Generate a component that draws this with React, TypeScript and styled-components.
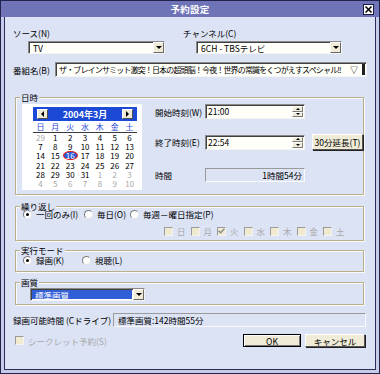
import React from 'react'
import styled, { createGlobalStyle } from 'styled-components'

const GlobalStyle = createGlobalStyle`
  html, body {
    margin: 0;
    padding: 0;
    background: #ffffff;
  }
  body {
    font-family: "Noto Sans CJK JP", "Noto Sans", sans-serif;
    font-size: 8.5px;
    color: #000;
  }
  * {
    box-sizing: border-box;
  }
`

const CLIENT = '#dce3f5'
const FIELD = '#fffffa'
const FACE = '#efebd6'

const sunken = `
  border: 1px solid;
  border-color: #8a8a8a #f4f4f4 #f4f4f4 #8a8a8a;
  box-shadow: inset 1px 1px 0 #404040;
`

const Window = styled.div`
  width: 380px;
  height: 374px;
  border: 1px solid #22224e;
  background: #c6cbe7;
  display: flex;
  flex-direction: column;
`

const TitleBar = styled.div`
  height: 16px;
  flex: none;
  background: #6f74b8;
  display: grid;
  grid-template-columns: 1fr auto 1fr;
  align-items: center;
  padding: 0 5px;
  color: #fff;
  font-weight: 700;
  font-size: 9.5px;
`

const Title = styled.span`
  grid-column: 2;
  letter-spacing: 0.3px;
`

const CloseBox = styled.span`
  grid-column: 3;
  justify-self: end;
  width: 11px;
  height: 11px;
  background: #fff;
  border: 1px solid #1a1a40;
  display: grid;
  place-items: center;
`

const Frame = styled.div`
  flex: 1;
  display: flex;
  padding: 0 3px 3px;
`

const Client = styled.div`
  flex: 1;
  background: ${CLIENT};
  border: 1px solid #2c2c5c;
  border-top: 0;
  padding: 10px 0 0 8px;
`

const Label = styled.span<{ $w?: number; $muted?: boolean }>`
  display: inline-block;
  line-height: 12px;
  white-space: nowrap;
  width: ${(p) => (p.$w ? `${p.$w}px` : 'auto')};
  flex: none;
  color: ${(p) => (p.$muted ? '#a4a4a4' : '#000')};
`

const TopRow = styled.div`
  display: grid;
  grid-template-columns: 170px 1fr;
`

const Field = styled.div`
  display: flex;
  flex-direction: column;
`

const SelectBox = styled.div<{ $w: number; $indent: number }>`
  ${sunken}
  margin: 2px 0 0 ${(p) => p.$indent}px;
  width: ${(p) => p.$w}px;
  height: 13px;
  background: ${FIELD};
  display: flex;
`

const SelectText = styled.span<{ $hl?: boolean }>`
  flex: 1;
  line-height: 11px;
  padding-left: 3px;
  margin: 1px;
  white-space: nowrap;
  background: ${(p) => (p.$hl ? '#2f5ed6' : 'transparent')};
  color: ${(p) => (p.$hl ? '#fff' : '#000')};
`

const SelectArrow = styled.span`
  width: 11px;
  flex: none;
  background: ${FACE};
  border: 1px solid;
  border-color: #fff #6a6a6a #6a6a6a #fff;
  display: grid;
  place-items: center;
  &::after {
    content: '';
    border-left: 3px solid transparent;
    border-right: 3px solid transparent;
    border-top: 3px solid #000;
  }
`

const ProgramRow = styled.div`
  display: flex;
  align-items: center;
  margin-top: 8px;
`

const TextField = styled.div`
  ${sunken}
  width: 312px;
  height: 15px;
  background: ${FIELD};
  display: flex;
  align-items: center;
  padding-left: 3px;
  white-space: nowrap;
  overflow: hidden;
  font-size: 8px;
`

const FieldText = styled.span`
  flex: 1;
  overflow: hidden;
  letter-spacing: -0.85px;
`

const FieldTail = styled.span`
  flex: none;
  padding: 0 4px 0 3px;
`

const FieldBar = styled.span`
  flex: none;
  width: 3px;
  height: 11px;
  margin-right: 1px;
  background: #202020;
`

const Group = styled.div<{ $mt: number }>`
  position: relative;
  margin: ${(p) => p.$mt}px 0 0 2px;
  width: 349px;
  border: 1px solid #b9b08a;
  box-shadow: inset 1px 1px 0 #fafafa, 1px 1px 0 #fafafa;
`

const Caption = styled.span`
  position: absolute;
  top: -6px;
  left: 4px;
  padding: 0 1px;
  line-height: 10px;
  background: ${CLIENT};
`

const DateTimeBody = styled.div`
  display: flex;
  padding: 6px 0 4px 6px;
`

const Calendar = styled.div`
  width: 120px;
  background: #fff;
  padding: 3px 5px 2px 11px;
  font-size: 8px;
`

const CalHeader = styled.div`
  height: 14px;
  margin-bottom: 1px;
  background: #1c4ad6;
  display: flex;
  align-items: center;
  justify-content: space-between;
  padding: 0 4px;
`

const CalArrow = styled.span<{ $dir: 'left' | 'right' }>`
  width: 11px;
  height: 10px;
  background: ${FACE};
  border: 1px solid;
  border-color: #fff #505050 #505050 #fff;
  display: grid;
  place-items: center;
  &::after {
    content: '';
    border-top: 3px solid transparent;
    border-bottom: 3px solid transparent;
    ${(p) => (p.$dir === 'left' ? 'border-right: 3px solid #000;' : 'border-left: 3px solid #000;')}
  }
`

const CalTitle = styled.span`
  color: #fff;
  font-weight: 700;
  font-size: 9px;
`

const DayNames = styled.div`
  display: grid;
  grid-template-columns: repeat(7, 1fr);
  height: 11px;
  line-height: 10px;
  border-bottom: 1px solid #3a3a3a;
  color: #1f47d8;
  text-align: center;
`

const DateGrid = styled.div`
  display: grid;
  grid-template-columns: repeat(7, 1fr);
  grid-auto-rows: 9.2px;
  line-height: 9px;
  text-align: center;
`

const DateCell = styled.span<{ $out?: boolean }>`
  color: ${(p) => (p.$out ? '#a8a8a8' : '#000')};
  display: flex;
  justify-content: center;
  align-items: center;
`

const Selected = styled.span`
  width: 15px;
  height: 9px;
  line-height: 7px;
  border-radius: 50%;
  border: 1px solid #e3201a;
  background: #2a5ad8;
  color: #fff;
  text-align: center;
`

const TimePanel = styled.div`
  margin-left: 13px;
  display: flex;
  flex-direction: column;
`

const TimeRow = styled.div<{ $mt: number }>`
  display: flex;
  align-items: center;
  margin-top: ${(p) => p.$mt}px;
`

const SpinField = styled.div`
  ${sunken}
  width: 100px;
  height: 15px;
  background: ${FIELD};
  display: flex;
`

const SpinText = styled.span`
  flex: 1;
  line-height: 13px;
  padding-left: 2px;
`

const Spinner = styled.span`
  width: 11px;
  margin: 1px 1px 1px 0;
  display: flex;
  flex-direction: column;
`

const SpinBtn = styled.span<{ $up?: boolean }>`
  flex: 1;
  background: ${FACE};
  border: 1px solid;
  border-color: #fff #7a7a7a #7a7a7a #fff;
  display: grid;
  place-items: center;
  &::after {
    content: '';
    border-left: 2px solid transparent;
    border-right: 2px solid transparent;
    ${(p) => (p.$up ? 'border-bottom: 2px solid #000;' : 'border-top: 2px solid #000;')}
  }
`

const ReadOnly = styled.div<{ $w: number; $align?: 'left' | 'right' }>`
  border: 1px solid;
  border-color: #9a9a9a #fafafa #fafafa #9a9a9a;
  width: ${(p) => p.$w}px;
  height: 14px;
  line-height: 12px;
  text-align: ${(p) => p.$align || 'left'};
  padding: 0 2px 0 4px;
  white-space: nowrap;
`

const PushButton = styled.button<{ $w: number; $h: number; $default?: boolean }>`
  font: inherit;
  color: #000;
  width: ${(p) => p.$w}px;
  height: ${(p) => p.$h}px;
  padding: 0;
  flex: none;
  background: ${FACE};
  border: 1px solid;
  border-color: ${(p) => (p.$default ? '#000' : '#fff #555 #555 #fff')};
  box-shadow: ${(p) =>
    p.$default ? 'inset 1px 1px 0 #fff, inset -1px -1px 0 #777' : '1px 1px 0 #202020'};
  line-height: 10px;
  white-space: nowrap;
`

const GroupBody = styled.div<{ $pt: number; $pb: number; $pl: number }>`
  padding: ${(p) => p.$pt}px 0 ${(p) => p.$pb}px ${(p) => p.$pl}px;
`

const OptionRow = styled.div<{ $mt?: number; $ml?: number }>`
  display: flex;
  align-items: center;
  height: 10px;
  margin-top: ${(p) => p.$mt || 0}px;
  margin-left: ${(p) => p.$ml || 0}px;
`

const Option = styled.span<{ $w?: number; $muted?: boolean }>`
  display: flex;
  align-items: center;
  width: ${(p) => (p.$w ? `${p.$w}px` : 'auto')};
  flex: none;
  white-space: nowrap;
  line-height: 10px;
  color: ${(p) => (p.$muted ? '#a8a8a8' : '#000')};
`

const RadioDot = styled.span<{ $on?: boolean }>`
  width: 9px;
  height: 9px;
  flex: none;
  margin-right: 4px;
  border-radius: 50%;
  border: 1px solid;
  border-color: #7a7a7a #e4e4e4 #e4e4e4 #7a7a7a;
  background: #fff;
  display: grid;
  place-items: center;
  &::after {
    content: '';
    width: 3px;
    height: 3px;
    border-radius: 50%;
    background: ${(p) => (p.$on ? '#000' : 'transparent')};
  }
`

const CheckBox = styled.span`
  width: 9px;
  height: 9px;
  flex: none;
  margin-right: 4px;
  border: 1px solid;
  border-color: #9a9a9a #f4f4f4 #f4f4f4 #9a9a9a;
  background: #f0ead0;
  display: grid;
  place-items: center;
`

const InfoRow = styled.div`
  display: flex;
  align-items: center;
  margin-top: 8px;
`

const BottomRow = styled.div`
  display: flex;
  align-items: center;
  width: 352px;
  margin-top: 7px;
  gap: 4px;
`

const Secret = styled.span`
  display: flex;
  align-items: center;
  margin-left: 2px;
  margin-right: auto;
  color: #a8a8a8;
`

const Check = () => (
  <svg width="7" height="6" viewBox="0 0 7 6">
    <path d="M0.5 2.8 L2.6 4.8 L6.5 0.8" fill="none" stroke="#8c8c8c" strokeWidth="1.4" />
  </svg>
)

const CloseIcon = () => (
  <svg width="7" height="7" viewBox="0 0 7 7">
    <path d="M0.5 0.5 L6.5 6.5 M6.5 0.5 L0.5 6.5" stroke="#000" strokeWidth="1.5" />
  </svg>
)

const dayNames = ['日', '月', '火', '水', '木', '金', '土']

const buildDates = () => {
  const cells: { d: number; out: boolean }[] = [{ d: 29, out: true }]
  for (let i = 1; i <= 31; i++) cells.push({ d: i, out: false })
  for (let i = 1; i <= 10; i++) cells.push({ d: i, out: true })
  return cells
}

const weekdays = [
  { name: '日', on: false },
  { name: '月', on: false },
  { name: '火', on: true },
  { name: '水', on: false },
  { name: '木', on: false },
  { name: '金', on: false },
  { name: '土', on: false },
]

const App: React.FC = () => {
  const dates = buildDates()

  return (
    <>
      <GlobalStyle />
      <Window>
        <TitleBar>
          <Title>予約設定</Title>
          <CloseBox>
            <CloseIcon />
          </CloseBox>
        </TitleBar>
        <Frame>
          <Client>
            <TopRow>
              <Field>
                <Label>ソース(N)</Label>
                <SelectBox $w={137} $indent={15}>
                  <SelectText>TV</SelectText>
                  <SelectArrow />
                </SelectBox>
              </Field>
              <Field>
                <Label>チャンネル(C)</Label>
                <SelectBox $w={146} $indent={13}>
                  <SelectText>6CH - TBSテレビ</SelectText>
                  <SelectArrow />
                </SelectBox>
              </Field>
            </TopRow>

            <ProgramRow>
              <Label $w={42}>番組名(B)</Label>
              <TextField>
                <FieldText>ザ・ブレインサミット激突！日本の超頭脳！今夜！世界の常識をくつがえすスペシャル!!</FieldText>
                <FieldTail>▽</FieldTail>
                <FieldBar />
              </TextField>
            </ProgramRow>

            <Group $mt={20}>
              <Caption>日時</Caption>
              <DateTimeBody>
                <Calendar>
                  <CalHeader>
                    <CalArrow $dir="left" />
                    <CalTitle>2004年3月</CalTitle>
                    <CalArrow $dir="right" />
                  </CalHeader>
                  <DayNames>
                    {dayNames.map((d) => (
                      <span key={d}>{d}</span>
                    ))}
                  </DayNames>
                  <DateGrid>
                    {dates.map((c, i) => (
                      <DateCell key={i} $out={c.out}>
                        {!c.out && c.d === 16 ? <Selected>{c.d}</Selected> : c.d}
                      </DateCell>
                    ))}
                  </DateGrid>
                </Calendar>

                <TimePanel>
                  <TimeRow $mt={0}>
                    <Label $w={50}>開始時刻(W)</Label>
                    <SpinField>
                      <SpinText>21:00</SpinText>
                      <Spinner>
                        <SpinBtn $up />
                        <SpinBtn />
                      </Spinner>
                    </SpinField>
                  </TimeRow>
                  <TimeRow $mt={15}>
                    <Label $w={50}>終了時刻(E)</Label>
                    <SpinField>
                      <SpinText>22:54</SpinText>
                      <Spinner>
                        <SpinBtn $up />
                        <SpinBtn />
                      </Spinner>
                    </SpinField>
                    <PushButton $w={51} $h={16} style={{ marginLeft: 7 }}>
                      30分延長(T)
                    </PushButton>
                  </TimeRow>
                  <TimeRow $mt={18}>
                    <Label $w={50}>時間</Label>
                    <ReadOnly $w={100} $align="right">
                      1時間54分
                    </ReadOnly>
                  </TimeRow>
                </TimePanel>
              </DateTimeBody>
            </Group>

            <Group $mt={11}>
              <Caption>繰り返し</Caption>
              <GroupBody $pt={2} $pb={4} $pl={7}>
                <OptionRow>
                  <Option $w={61}>
                    <RadioDot $on />
                    一回のみ(I)
                  </Option>
                  <Option $w={46}>
                    <RadioDot />
                    毎日(O)
                  </Option>
                  <Option>
                    <RadioDot />
                    毎週－曜日指定(P)
                  </Option>
                </OptionRow>
                <OptionRow $mt={7} $ml={141}>
                  {weekdays.map((w) => (
                    <Option key={w.name} $w={26.5} $muted>
                      <CheckBox>{w.on && <Check />}</CheckBox>
                      {w.name}
                    </Option>
                  ))}
                </OptionRow>
              </GroupBody>
            </Group>

            <Group $mt={9}>
              <Caption>実行モード</Caption>
              <GroupBody $pt={4} $pb={6} $pl={7}>
                <OptionRow>
                  <Option $w={59}>
                    <RadioDot $on />
                    録画(K)
                  </Option>
                  <Option>
                    <RadioDot />
                    視聴(L)
                  </Option>
                </OptionRow>
              </GroupBody>
            </Group>

            <Group $mt={10}>
              <Caption>画質</Caption>
              <GroupBody $pt={5} $pb={3} $pl={14}>
                <SelectBox $w={115} $indent={0} style={{ marginTop: 0 }}>
                  <SelectText $hl>標準画質</SelectText>
                  <SelectArrow />
                </SelectBox>
              </GroupBody>
            </Group>

            <InfoRow>
              <Label $w={100}>録画可能時間 (Cドライブ)</Label>
              <ReadOnly $w={253}>標準画質:142時間55分</ReadOnly>
            </InfoRow>

            <BottomRow>
              <Secret>
                <CheckBox />
                シークレット予約(S)
              </Secret>
              <PushButton $w={58} $h={13} $default>
                OK
              </PushButton>
              <PushButton $w={60} $h={13}>
                キャンセル
              </PushButton>
            </BottomRow>
          </Client>
        </Frame>
      </Window>
    </>
  )
}

export default App
